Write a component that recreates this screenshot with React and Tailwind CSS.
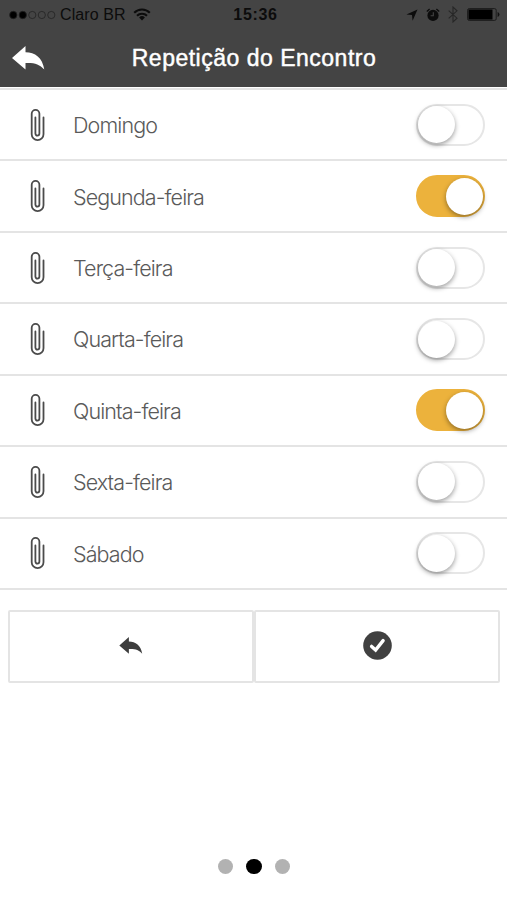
import React, { useState } from 'react'

const initialDays = [
  { name: 'Domingo', active: false },
  { name: 'Segunda-feira', active: true },
  { name: 'Terça-feira', active: false },
  { name: 'Quarta-feira', active: false },
  { name: 'Quinta-feira', active: true },
  { name: 'Sexta-feira', active: false },
  { name: 'Sábado', active: false },
]

function ReplyIcon({ className }) {
  return (
    <svg viewBox="0 0 33 24" className={className} fill="currentColor">
      <path d="M0 12 L13.5 0 V6.2 C23 6.2 30.5 11.5 32.3 23.6 C27.5 18.2 22.5 16.6 13.5 17 V23.6 Z" />
    </svg>
  )
}

function PaperclipIcon() {
  return (
    <svg
      viewBox="0 0 15 34"
      className="h-[34px] w-[15px]"
      fill="none"
      stroke="#4b4b4b"
      strokeWidth="1.8"
      strokeLinecap="round"
    >
      <path d="M13.5 9.5 V26.3 a5.9 5.9 0 0 1 -11.8 0 V5.8 a3.85 3.85 0 0 1 7.7 0 V25.6 a2 2 0 0 1 -4 0 V9.5" />
    </svg>
  )
}

function StatusBar() {
  return (
    <div className="flex h-[29px] items-center leading-none text-[#0c0c0c]">
      <div className="flex flex-1 items-center pl-[9px]">
        <svg viewBox="0 0 48 10" className="h-[10px] w-[48px]" stroke="#222" strokeWidth="0.8">
          <circle cx="4.3" cy="5" r="3.7" fill="#000" />
          <circle cx="13.8" cy="5" r="3.7" fill="#000" />
          <circle cx="23.3" cy="5" r="3.6" fill="none" />
          <circle cx="32.8" cy="5" r="3.6" fill="none" />
          <circle cx="42.3" cy="5" r="3.6" fill="none" />
        </svg>
        <span className="ml-[3px] text-[16px] tracking-[0.1px]">Claro BR</span>
        <svg viewBox="0 0 18 13" className="ml-[7px] h-[13px] w-[18px]" fill="none" stroke="#0c0c0c" strokeWidth="2.1">
          <path d="M1.2 4.8 a11 11 0 0 1 15.6 0" />
          <path d="M4 7.8 a7 7 0 0 1 10 0" />
          <path d="M9 12.4 L6.1 9.5 a4.1 4.1 0 0 1 5.8 0 Z" fill="#0c0c0c" stroke="none" />
        </svg>
      </div>
      <span className="pl-[2px] text-[16px] font-bold tracking-[0.7px]">15:36</span>
      <div className="flex flex-1 items-center justify-end pr-[7px]">
        <svg viewBox="0 0 12 12" className="h-[12px] w-[12px]" fill="#0c0c0c">
          <path d="M11.5 0.5 L6.6 11.7 L6 6 L0.4 5.4 Z" />
        </svg>
        <svg viewBox="0 0 14 14" className="ml-[8px] h-[14px] w-[14px]" fill="none" stroke="#0c0c0c">
          <circle cx="7" cy="7.4" r="5.6" fill="#0c0c0c" stroke="none" />
          <path d="M0.8 3.6 L3.6 1.1 M13.2 3.6 L10.4 1.1" strokeWidth="1.3" />
          <path d="M7.3 4.2 V7.8 H4.6" stroke="#444" strokeWidth="1.1" />
        </svg>
        <svg viewBox="0 0 10 17" className="ml-[8px] h-[17px] w-[10px]" fill="none" stroke="#272727" strokeWidth="1.1">
          <path d="M0.7 4.6 L9 12.2 L5 16 V1 L9 4.8 L0.7 12.4" />
        </svg>
        <svg viewBox="0 0 33 13" className="ml-[9px] h-[13px] w-[33px]">
          <rect x="0.6" y="0.6" width="28.6" height="11.8" rx="1.6" fill="none" stroke="#1c1c1c" />
          <rect x="1.5" y="1.5" width="24" height="10" fill="#000" />
          <path d="M30.6 4 a2.6 2.6 0 0 1 0 5 Z" fill="#111" />
        </svg>
      </div>
    </div>
  )
}

function Header() {
  return (
    <header className="h-[87px] bg-[#444444]">
      <StatusBar />
      <div className="grid h-[58px] grid-cols-[60px_1fr_60px] items-center">
        <button className="pl-[12px] text-white">
          <ReplyIcon className="h-[24px] w-[33px]" />
        </button>
        <h1 className="pl-[1px] text-center text-[23px] leading-none tracking-[0.5px] whitespace-nowrap text-white [-webkit-text-stroke:0.45px_white]">
          Repetição do Encontro
        </h1>
      </div>
    </header>
  )
}

function Toggle({ active, onClick }) {
  return (
    <button
      role="switch"
      aria-checked={active}
      onClick={onClick}
      className={`flex h-[42px] w-[69px] items-center rounded-full border-2 ${
        active ? 'justify-end border-[#ecb23c] bg-[#ecb23c]' : 'border-[#e6e6e6] bg-white'
      }`}
    >
      <span className="h-[37px] w-[37px] rounded-full bg-white shadow-[0_2px_5px_rgba(0,0,0,0.4)]" />
    </button>
  )
}

function App() {
  const [days, setDays] = useState(initialDays)

  const toggleDay = (name) => {
    setDays(days.map((day) => (day.name === name ? { ...day, active: !day.active } : day)))
  }

  return (
    <div className="flex h-[900px] w-[507px] flex-col bg-white font-['Liberation_Sans',Arial,sans-serif]">
      <Header />
      <ul className="mt-px border-t-2 border-[#e4e4e4]">
        {days.map((day) => (
          <li
            key={day.name}
            className="flex h-[71.45px] items-center border-b-2 border-[#e4e4e4] pr-[22px] pl-[30px]"
          >
            <PaperclipIcon />
            <span className="ml-[28px] flex-1 pt-px font-['Inter',sans-serif] text-[21.5px] font-light tracking-[-0.9px] text-[#5a5a5a]">
              {day.name}
            </span>
            <Toggle active={day.active} onClick={() => toggleDay(day.name)} />
          </li>
        ))}
      </ul>
      <div className="mt-[20px] mr-[7px] ml-[8px] grid h-[73px] grid-cols-2">
        <button className="flex items-center justify-center rounded-xs border-2 border-[#e4e4e4] pb-[2px] text-[#3d3d3d]">
          <ReplyIcon className="h-[17px] w-[24px]" />
        </button>
        <button className="flex items-center justify-center rounded-xs border-2 border-[#e4e4e4] pb-[2px]">
          <svg viewBox="0 0 29 29" className="h-[29px] w-[29px]">
            <circle cx="14.5" cy="14.5" r="14.3" fill="#404040" />
            <path
              d="M8.6 15.4 L12.6 19 L20.1 9.6"
              fill="none"
              stroke="#fff"
              strokeWidth="3.4"
              strokeLinecap="round"
            />
          </svg>
        </button>
      </div>
      <div className="mt-auto mb-[26px] flex justify-center gap-[13px] pl-px">
        <span className="h-[15.5px] w-[15.5px] rounded-full bg-[#b2b2b2]" />
        <span className="h-[15.5px] w-[15.5px] rounded-full bg-black" />
        <span className="h-[15.5px] w-[15.5px] rounded-full bg-[#b2b2b2]" />
      </div>
    </div>
  )
}

export default App
